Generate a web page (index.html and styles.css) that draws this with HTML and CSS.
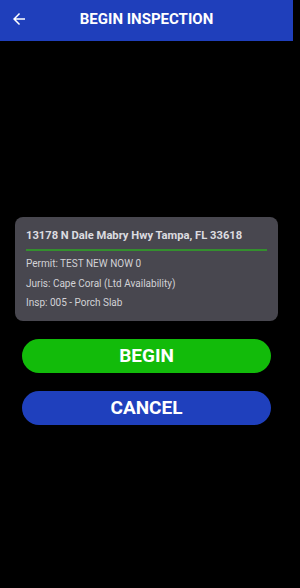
FILE: index.html
```html
<!DOCTYPE html>
<html>
<head>
  <link rel="stylesheet" href="styles.css">
</head>
<body>
  <div class="screen">
    <div class="header">
      <div class="back">
        <svg width="18" height="18" viewBox="0 0 24 24"><path d="M20 11H7.83l5.59-5.59L12 4l-8 8 8 8 1.41-1.41L7.83 13H20v-2z" fill="#fff"/></svg>
      </div>
      <div class="title">BEGIN INSPECTION</div>
    </div>
    <div class="body">
      <div class="card">
        <div class="address">13178 N Dale Mabry Hwy Tampa, FL 33618</div>
        <div class="line">Permit: TEST NEW NOW 0</div>
        <div class="line">Juris: Cape Coral (Ltd Availability)</div>
        <div class="line">Insp: 005 - Porch Slab</div>
      </div>
      <div class="button begin">BEGIN</div>
      <div class="button cancel">CANCEL</div>
    </div>
  </div>
</body>
</html>
```

FILE: styles.css
```css
body {
  margin: 0;
  background-color: #000;
  font-family: Roboto, 'Noto Sans', sans-serif;
  width: 300px;
  height: 588px;
  overflow: hidden;
}
.screen {
  width: 293px;
  height: 588px;
  display: flex;
  flex-direction: column;
}
.header {
  height: 41px;
  background-color: #1f3fbb;
  display: flex;
  align-items: center;
  position: relative;
}
.back {
  width: 38px;
  display: flex;
  justify-content: center;
  margin-top: -4px;
}
.back svg {
  display: block;
}
.title {
  position: absolute;
  left: 0;
  right: 0;
  top: 0;
  bottom: 4px;
  display: flex;
  align-items: center;
  justify-content: center;
  color: #fff;
  font-weight: 700;
  font-size: 15px;
  pointer-events: none;
}
.body {
  padding-top: 176px;
  padding-left: 15px;
  padding-right: 15px;
}
.card {
  background-color: #48474f;
  border-radius: 8px;
  padding: 12px 11px 8px 11px;
  color: #d2d2d6;
}
.address {
  font-weight: 700;
  font-size: 11.2px;
  line-height: 13px;
  padding-bottom: 7px;
  border-bottom: 2px solid #348f2e;
  margin-bottom: 3px;
  color: #dcdce0;
}
.line {
  font-size: 10px;
  line-height: 19.5px;
}
.button {
  margin-left: 7px;
  margin-right: 7px;
  height: 34px;
  border-radius: 17px;
  color: #fff;
  font-weight: 700;
  font-size: 19px;
  display: flex;
  align-items: center;
  justify-content: center;
}
.begin {
  margin-top: 18px;
  background-color: #12bb0a;
}
.cancel {
  margin-top: 18px;
  background-color: #1f40bd;
}
```
